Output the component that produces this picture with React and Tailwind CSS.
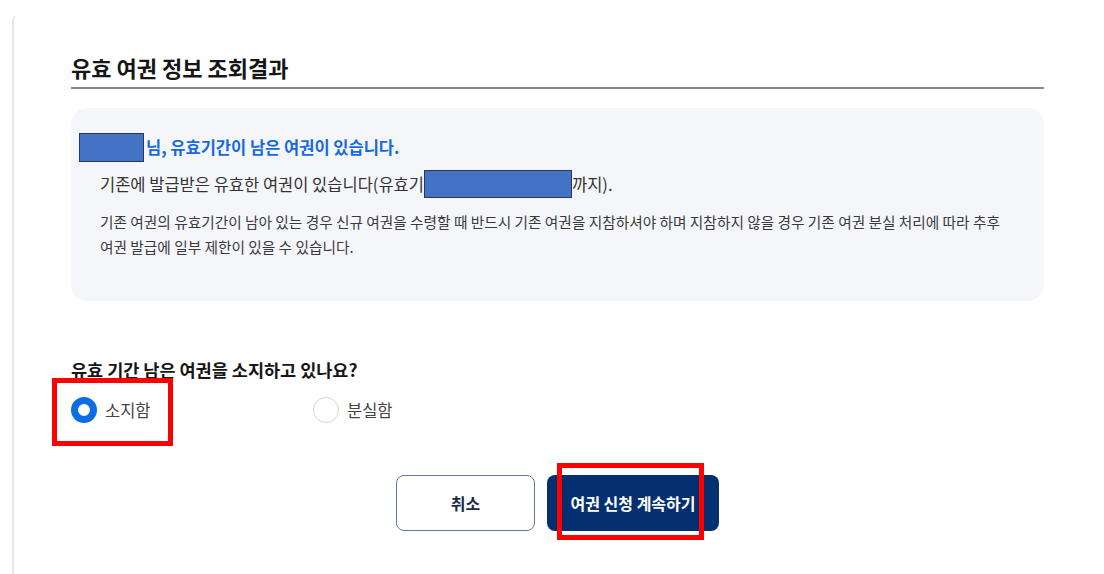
import { useState } from "react";

// 가려진 개인정보 영역 (캡처의 파란 박스)
const Redacted = ({ className = "" }) => (
  <span className={`inline-block shrink-0 bg-[#4472c4] border border-[#1f3864] ${className}`} />
);

const Radio = ({ checked, label, onClick }) => (
  <button type="button" onClick={onClick} className="flex items-center gap-[8px]">
    <span
      className={`w-[26px] h-[26px] rounded-full bg-white ${
        checked ? "border-[7px] border-[#0b6ee3]" : "border border-[#d4d4d4]"
      }`}
    />
    <span className="text-[16.5px] text-[#444]">{label}</span>
  </button>
);

export default function App() {
  const [owned, setOwned] = useState(true);

  return (
    <div className="w-[1104px] h-[574px] bg-white overflow-hidden font-['Noto_Sans_CJK_KR','Noto_Sans',sans-serif]">
      <div className="ml-[12px] mt-[15px] h-[600px] border-l-2 border-[#e4e8f8] rounded-tl-[6px] pl-[57px] pr-[58px]">
        {/* 제목 */}
        <div className="pt-[38px] pb-[6px] border-b-2 border-[#8a8a8a] w-[973px]">
          <h2 className="text-[22px] leading-[28px] font-bold text-[#161616]">
            유효 여권 정보 조회결과
          </h2>
        </div>

        {/* 안내 박스 */}
        <div className="mt-[19px] w-[973px] h-[193px] bg-[#f5f6fa] rounded-[16px] pt-[25px] pl-[8px]">
          <div className="flex items-center h-[29px]">
            <Redacted className="w-[65px] h-[29px]" />
            <span className="ml-[2px] text-[16.5px] font-bold text-[#1769e0]">
              님, 유효기간이 남은 여권이 있습니다.
            </span>
          </div>
          <div className="mt-[8px] pl-[21px] flex items-center h-[28px] text-[16.5px] text-[#333] whitespace-nowrap">
            <span>기존에 발급받은 유효한 여권이 있습니다(유효기</span>
            <Redacted className="w-[148px] h-[28px]" />
            <span>까지).</span>
          </div>
          <p className="mt-[11px] pl-[21px] text-[14.7px] leading-[25px] text-[#3a3a3a] whitespace-nowrap">
            기존 여권의 유효기간이 남아 있는 경우 신규 여권을 수령할 때 반드시 기존 여권을 지참하셔야 하며 지참하지 않을 경우 기존 여권 분실 처리에 따라 추후
            <br />
            여권 발급에 일부 제한이 있을 수 있습니다.
          </p>
        </div>

        {/* 질문 */}
        <h3 className="mt-[57px] text-[17.5px] leading-[24px] font-bold text-[#161616]">
          유효 기간 남은 여권을 소지하고 있나요?
        </h3>
        <div className="relative mt-[15px] flex items-center h-[26px]">
          <div className="w-[242px]">
            <Radio checked={owned} label="소지함" onClick={() => setOwned(true)} />
          </div>
          <Radio checked={!owned} label="분실함" onClick={() => setOwned(false)} />
          {/* 강조 표시 */}
          <span className="absolute left-[-19px] top-[-19px] w-[121px] h-[68px] border-[5px] border-[#ff0000] pointer-events-none" />
        </div>

        {/* 버튼 */}
        <div className="mt-[52px] w-[973px] flex justify-center gap-[12px]">
          <button
            type="button"
            className="w-[139px] h-[56px] rounded-[8px] border border-[#6478a6] bg-white text-[16px] font-bold text-[#1b2a4a]"
          >
            취소
          </button>
          <div className="relative">
            <button
              type="button"
              className="w-[172px] h-[56px] rounded-[8px] bg-[#05306f] text-[16px] font-bold text-white"
            >
              여권 신청 계속하기
            </button>
            <span className="absolute left-[10px] top-[-12px] w-[147px] h-[77px] border-[5px] border-[#ff0000] pointer-events-none" />
          </div>
        </div>
      </div>
    </div>
  );
}
